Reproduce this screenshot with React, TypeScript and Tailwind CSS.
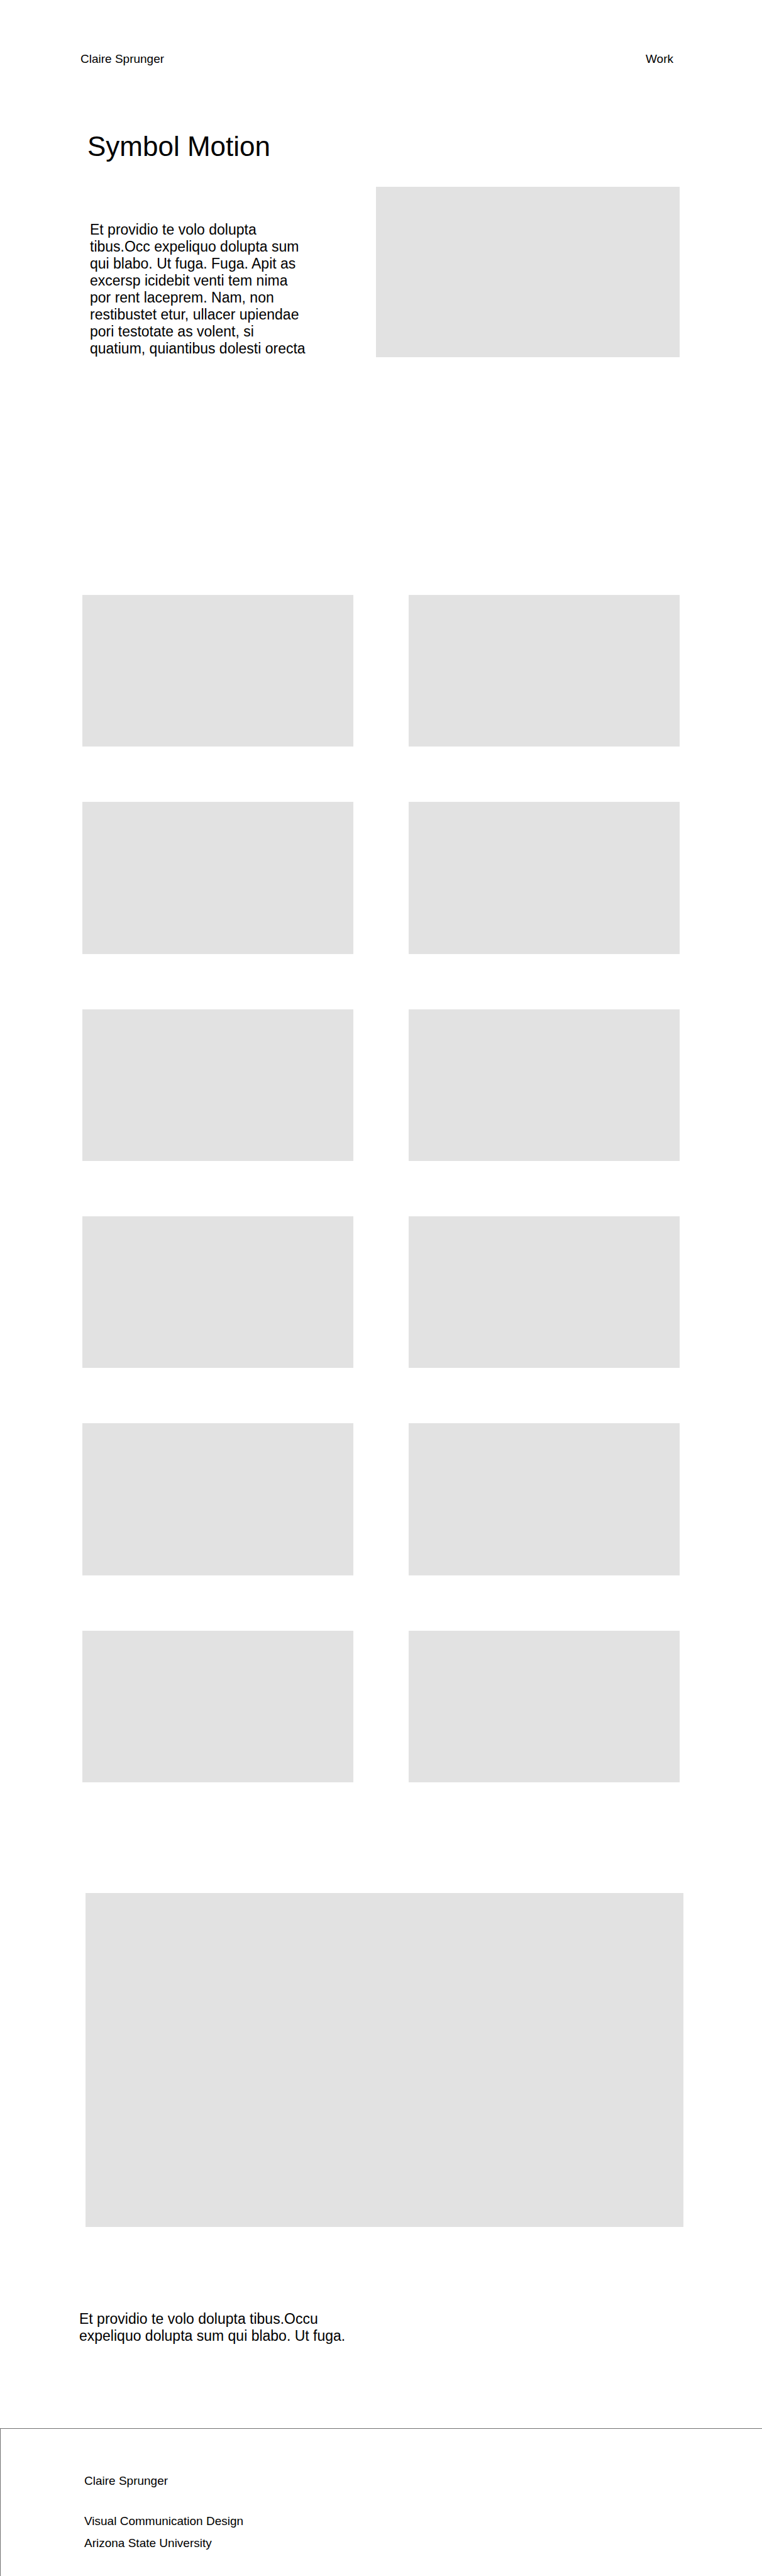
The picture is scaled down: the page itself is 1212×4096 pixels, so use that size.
const tiles = Array.from({ length: 12 }, (_, i) => i);

function Header() {
  return (
    <header className="flex items-center justify-between pt-[82px] pr-[141px] pl-[128px] text-[19px] leading-6">
      <a href="#home">Claire Sprunger</a>
      <nav>
        <a href="#work">Work</a>
      </nav>
    </header>
  );
}

function Intro() {
  return (
    <section>
      <h1 className="mt-[101px] pl-[139px] text-[44px] leading-[52px]">Symbol Motion</h1>
      <div className="mt-[38px] flex items-start gap-[107px] pr-[131px] pl-[143px]">
        <p className="w-[348px] shrink-0 pt-[55px] text-[23px] leading-[27px]">
          Et providio te volo dolupta tibus.Occ expeliquo dolupta sum qui blabo. Ut fuga. Fuga. Apit as
          excersp icidebit venti tem nima por rent laceprem. Nam, non restibustet etur, ullacer upiendae
          pori testotate as volent, si quatium, quiantibus dolesti orecta
        </p>
        <div className="mb-[378px] aspect-[510/286] flex-1 bg-[#e2e2e2]" />
      </div>
    </section>
  );
}

function Gallery() {
  return (
    <section className="grid grid-cols-2 gap-[88px] px-[131px]">
      {tiles.map((tile) => (
        <div key={tile} className="aspect-[25/14] bg-[#e2e2e2]" />
      ))}
    </section>
  );
}

function Feature() {
  return (
    <section>
      <div className="mt-44 pr-[125px] pl-[136px]">
        <div className="aspect-[951/531] bg-[#e2e2e2]" />
      </div>
      <p className="mt-[133px] pl-[126px] text-[23px] leading-[27px]">
        Et providio te volo dolupta tibus.Occu
        <br />
        expeliquo dolupta sum qui blabo. Ut fuga.
      </p>
    </section>
  );
}

function Footer() {
  return (
    <footer className="mt-[133px] border-t border-l border-[#707070] pt-[71px] pb-10 pl-[133px] text-[19px] leading-6">
      <p>Claire Sprunger</p>
      <div className="mt-10 flex flex-col gap-[11px]">
        <p>Visual Communication Design</p>
        <p>Arizona State University</p>
      </div>
    </footer>
  );
}

export default function App() {
  return (
    <div className="bg-white font-['Liberation_Sans',Arial,sans-serif] text-black">
      <Header />
      <main>
        <Intro />
        <Gallery />
        <Feature />
      </main>
      <Footer />
    </div>
  );
}
